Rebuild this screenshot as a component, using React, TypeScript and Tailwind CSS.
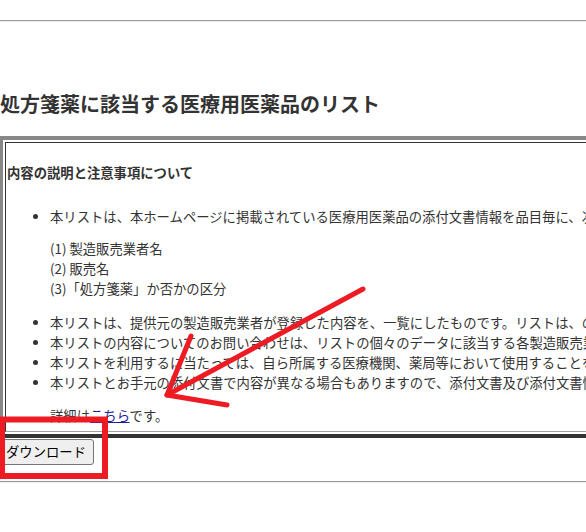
export default function App() {
  return (
    <div className="relative w-[586px] h-[532px] overflow-hidden bg-white text-[#333] font-['Noto_Sans_CJK_JP','Noto_Sans',sans-serif]">
      <div className="pt-5">
        <hr className="border-0 border-t border-t-[#9a9a9a] border-b border-b-[#eeeeee]" />
      </div>

      <h1 className="mt-[68px] whitespace-nowrap text-[20px] leading-7 font-bold">
        処方箋薬に該当する医療用医薬品のリスト
      </h1>

      {/* table with outset border */}
      <div className="ml-[-1px] mt-[18px] w-[980px] border-t-4 border-l-4 border-b-4 border-t-[#888] border-l-[#888] border-b-[#333] p-[2px]">
        <div className="border-t border-l border-b border-r border-t-[#333] border-l-[#333] border-b-[#a0a0a0] border-r-[#a0a0a0] pt-5 pb-[5px] pl-px text-[13.33px] leading-5 whitespace-nowrap">
          <p className="font-bold">内容の説明と注意事項について</p>

          <ul className="mt-6 list-disc pl-[43px]">
            <li>本リストは、本ホームページに掲載されている医療用医薬品の添付文書情報を品目毎に、次の項目で整理したものです。</li>
          </ul>

          <div className="mt-3 pl-[43px]">
            <p>(1) 製造販売業者名</p>
            <p>(2) 販売名</p>
            <p>(3)「処方箋薬」か否かの区分</p>
          </div>

          <ul className="mt-[14px] list-disc pl-[43px]">
            <li>本リストは、提供元の製造販売業者が登録した内容を、一覧にしたものです。リストは、の内容を確認の上ご利用ください。</li>
            <li>本リストの内容についてのお問い合わせは、リストの個々のデータに該当する各製造販売業者へお願いします。</li>
            <li>本リストを利用するに当たっては、自ら所属する医療機関、薬局等において使用することを前提としてください。</li>
            <li>本リストとお手元の添付文書で内容が異なる場合もありますので、添付文書及び添付文書情報をご確認ください。</li>
          </ul>

          <p className="mt-[13px] pl-[43px]">
            詳細は<a href="#" className="text-[#1f1f9c] underline">こちら</a>です。
          </p>
        </div>
      </div>

      <button className="ml-[-1px] mt-px h-[26px] w-[95px] rounded-[3px] border border-[#767676] bg-[#efefef] px-[6px] text-left text-[13.33px] text-black">
        ダウンロード
      </button>

      <hr className="mt-4 border-0 border-t border-t-[#9a9a9a] border-b border-b-[#eeeeee]" />

      {/* red annotation marks */}
      <svg className="pointer-events-none absolute inset-0" width="586" height="532" viewBox="0 0 586 532">
        <g stroke="#ed1c24" strokeWidth="6" fill="none" strokeLinecap="square">
          <rect x="2" y="419.5" width="103" height="56.5" />
        </g>
        <g stroke="#ed1c24" strokeWidth="5" fill="none" strokeLinecap="round" strokeLinejoin="round">
          <path d="M363 289 L167 395" />
          <path d="M191 336 L167 395 L227 405" />
        </g>
      </svg>
    </div>
  );
}
